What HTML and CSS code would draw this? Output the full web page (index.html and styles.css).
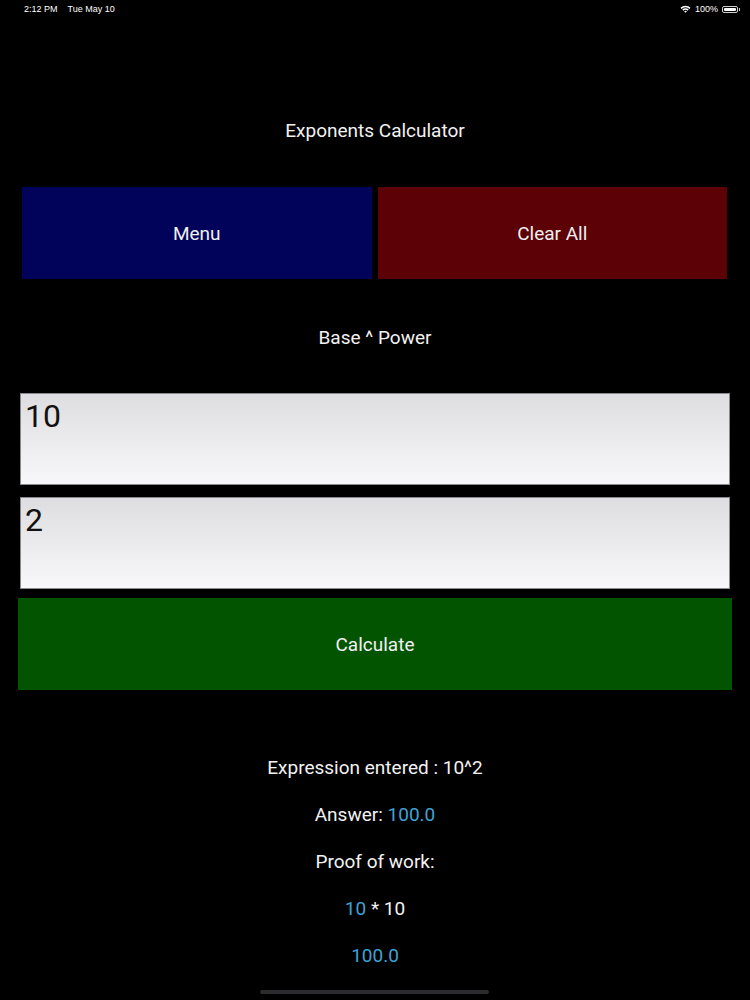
FILE: index.html
```html
<!DOCTYPE html>
<html>
<head>
<meta charset="utf-8">
<link rel="stylesheet" href="styles.css">
</head>
<body>
<div class="screen">
  <div class="status">
    <div class="status-left"><span>2:12 PM</span><span class="date">Tue May 10</span></div>
    <div class="status-right">
      <svg class="wifi" width="11" height="8" viewBox="0 0 11 8"><path d="M0.5 2.8 A7 7 0 0 1 10.5 2.8 L9.4 3.9 A5.4 5.4 0 0 0 1.6 3.9 Z" fill="#fff"/><path d="M2.3 4.6 A4.6 4.6 0 0 1 8.7 4.6 L7.6 5.7 A3 3 0 0 0 3.4 5.7 Z" fill="#fff"/><path d="M4.1 6.4 A2 2 0 0 1 6.9 6.4 L5.5 7.8 Z" fill="#fff"/></svg>
      <span>100%</span>
      <span class="battery"><span class="battery-fill"></span></span><span class="battery-tip"></span>
    </div>
  </div>
  <h1 class="title">Exponents Calculator</h1>
  <div class="btn-row">
    <div class="btn btn-menu">Menu</div>
    <div class="btn btn-clear">Clear All</div>
  </div>
  <div class="label">Base ^ Power</div>
  <div class="field field-first">10</div>
  <div class="field field-second">2</div>
  <div class="btn btn-calc">Calculate</div>
  <div class="results">
    <div class="line">Expression entered : 10^2</div>
    <div class="line">Answer: <span class="blue">100.0</span></div>
    <div class="line">Proof of work:</div>
    <div class="line"><span class="blue">10</span> * 10</div>
    <div class="line blue">100.0</div>
  </div>
  <div class="home"></div>
</div>
</body>
</html>
```
FILE: styles.css
```css
html, body {
  margin: 0;
  padding: 0;
  background: #000;
}
.screen {
  width: 750px;
  height: 1000px;
  background: #000;
  color: #f2f2f2;
  font-family: Roboto, "Noto Sans", sans-serif;
  position: relative;
  overflow: hidden;
}
.status {
  display: flex;
  justify-content: space-between;
  align-items: center;
  height: 18px;
  padding: 0 10px 0 24px;
  font-family: "Liberation Sans", Arial, sans-serif;
  font-size: 9px;
  color: #fff;
}
.status-left .date { margin-left: 10px; }
.status-right {
  display: flex;
  align-items: center;
  gap: 3px;
}
.wifi { margin-right: 1px; }
.battery {
  width: 16px;
  height: 7px;
  border: 1px solid #cfcfcf;
  border-radius: 2px;
  padding: 1px;
  box-sizing: border-box;
  display: inline-flex;
  margin-left: 1px;
}
.battery-fill {
  flex: 1;
  background: #fff;
  border-radius: 1px;
}
.battery-tip {
  width: 1px;
  height: 3px;
  background: #cfcfcf;
  margin-left: -2px;
}
.title {
  margin: 100px 0 0;
  height: 26px;
  line-height: 26px;
  text-align: center;
  font-size: 19px;
  font-weight: 400;
}
.btn-row {
  display: flex;
  gap: 6px;
  margin: 43px 23px 0 22px;
}
.btn {
  height: 92px;
  display: flex;
  align-items: center;
  justify-content: center;
  font-size: 19px;
  color: #f0f0f0;
}
.btn-row .btn { flex: 1; }
.btn-menu { background: #01035a; }
.btn-clear { background: #5c0105; }
.label {
  margin-top: 46px;
  text-align: center;
  font-size: 19px;
  height: 26px;
  line-height: 26px;
}
.field {
  margin: 0 20px;
  height: 92px;
  box-sizing: border-box;
  border: 1px solid #8a8a8e;
  background: linear-gradient(#dedde1, #e8e8ea 40%, #f8f8fa);
  color: #111;
  font-size: 32px;
  line-height: 1;
  padding: 6px 0 0 4px;
}
.field-first { margin-top: 42px; }
.field-second { margin-top: 12px; }
.btn-calc {
  margin: 9px 18px 0;
  background: #035401;
}
.results {
  margin-top: 65px;
  display: flex;
  flex-direction: column;
  gap: 21px;
  text-align: center;
  font-size: 19px;
}
.line {
  height: 26px;
  line-height: 26px;
}
.blue { color: #3ea3d6; }
.home {
  position: absolute;
  left: 260px;
  top: 990px;
  width: 229px;
  height: 4px;
  border-radius: 2px;
  background: #2c2c2e;
}
```
